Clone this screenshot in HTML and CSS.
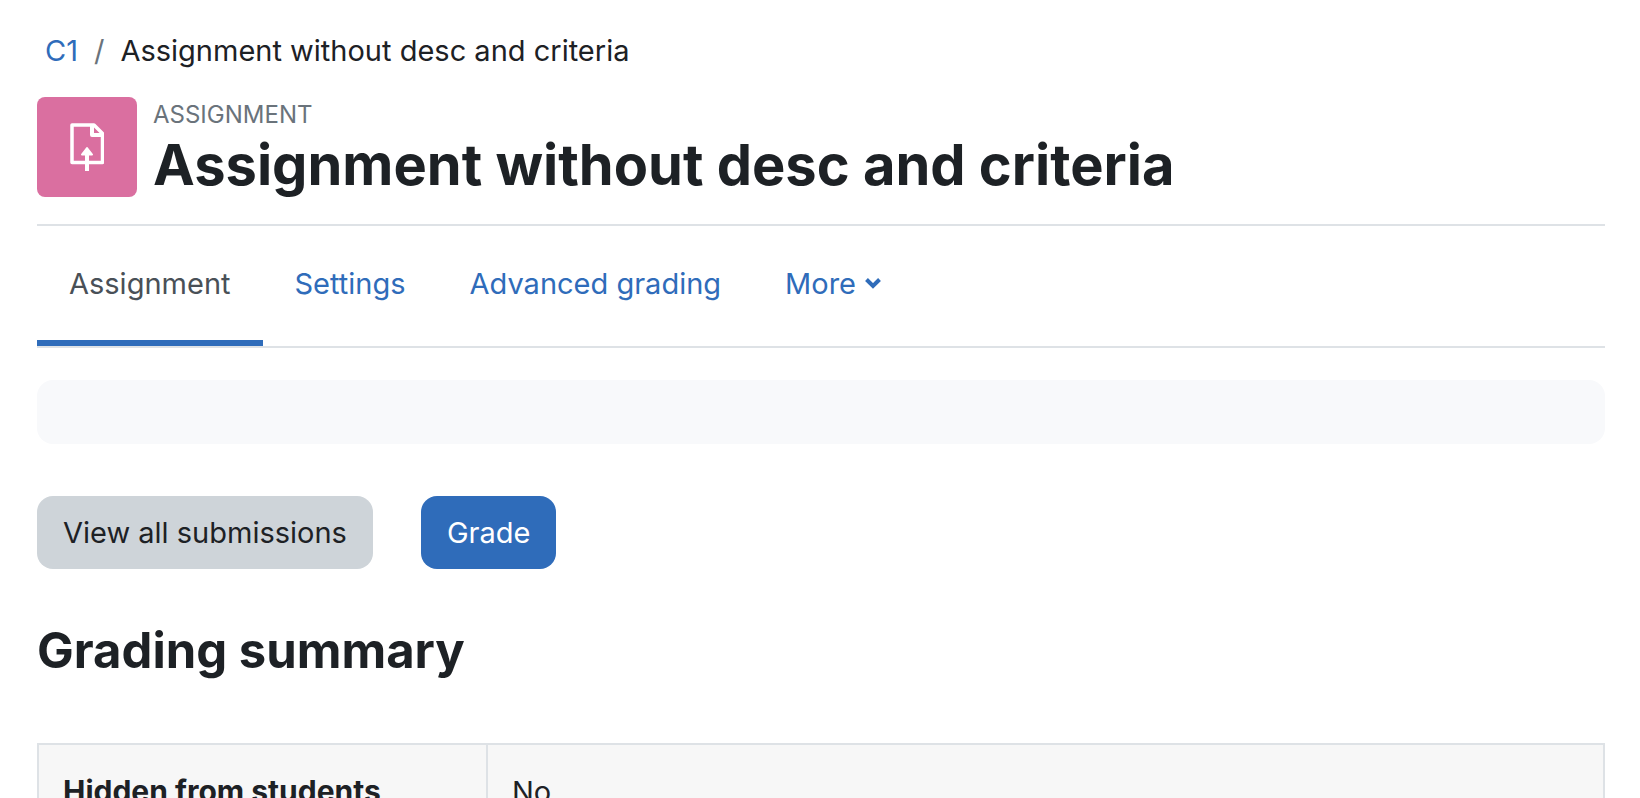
FILE: index.html
```
<!DOCTYPE html>
<html lang="en">
  <head>
    <meta charset="UTF-8" />
    <meta name="viewport" content="width=device-width, initial-scale=1.0" />
    <title>Assignment without desc and criteria</title>
    <link rel="stylesheet" href="styles.css">
  </head>
  <body>
    <nav aria-label="Breadcrumb">
      <ol class="breadcrumb">
        <li><a href="#">C1</a></li>
        <li>Assignment without desc and criteria</li>
      </ol>
    </nav>

    <header class="page-header">
      <div class="activity-icon">
        <svg width="34" height="48" viewBox="0 0 34 48" fill="none" stroke="#fff" stroke-width="3" stroke-linejoin="round" aria-hidden="true">
          <path d="M2 2H24L32.5 10.5V39.5H2Z" stroke-width="3.5" />
          <path d="M22 2V12H32.5" stroke-width="4" />
          <path d="M17 48V30" stroke-width="4" />
          <path d="M17 25L22 31.5H12Z" fill="#fff" stroke-width="2" />
        </svg>
      </div>
      <div class="page-heading">
        <div class="activity-type">Assignment</div>
        <h1>Assignment without desc and criteria</h1>
      </div>
    </header>

    <nav class="tabs" aria-label="Assignment navigation">
      <a class="tab active" href="#">Assignment</a>
      <a class="tab" href="#">Settings</a>
      <a class="tab" href="#">Advanced grading</a>
      <a class="tab" href="#">More
        <svg width="16" height="12" viewBox="0 0 16 12" fill="none" stroke="currentColor" stroke-width="4" aria-hidden="true">
          <path d="M1.5 2.5L8 9L14.5 2.5" />
        </svg>
      </a>
    </nav>

    <main>
      <div class="activity-info"></div>

      <div class="buttons">
        <button class="btn-secondary" type="button">View all submissions</button>
        <button class="btn-primary" type="button">Grade</button>
      </div>

      <h2>Grading summary</h2>
      <table class="summary">
        <tbody>
          <tr>
            <th scope="row">Hidden from students</th>
            <td>No</td>
          </tr>
        </tbody>
      </table>
    </main>
  </body>
</html>
```

FILE: styles.css
```
* {
    box-sizing: border-box;
}
html {
    overflow: hidden;
}
body {
    margin: 0;
    padding: 28px 35px 0 37px;
    background: #fff;
    color: #1d2125;
    font-family: Inter, "Liberation Sans", sans-serif;
    font-size: 29px;
    line-height: 45px;
}
a {
    color: #2f6cba;
    text-decoration: none;
}
.breadcrumb {
    display: flex;
    margin: 0;
    padding: 0 8px;
    list-style: none;
}
.breadcrumb li + li::before {
    content: "/";
    padding: 0 16px;
    color: #6a737b;
}
.page-header {
    display: flex;
    align-items: center;
    gap: 16px;
    padding: 22px 0 25px;
    border-bottom: 2px solid #dee2e6;
}
.activity-icon {
    display: flex;
    flex: none;
    align-items: center;
    justify-content: center;
    width: 100px;
    height: 100px;
    border-radius: 8px;
    background: #da6fa0;
}
.page-heading {
    padding-top: 4px;
}
.activity-type {
    color: #6a737b;
    font-size: 24px;
    line-height: 32px;
    text-transform: uppercase;
}
h1 {
    margin: 0;
    font-size: 56px;
    font-weight: 700;
    line-height: 68px;
}
.tabs {
    display: flex;
    border-bottom: 2px solid #dee2e6;
}
.tab {
    display: flex;
    align-items: center;
    gap: 9px;
    height: 120px;
    padding: 0 32px;
    border-bottom: 6px solid transparent;
}
.tab.active {
    border-bottom-color: #2f6cba;
    color: #495057;
}
.activity-info {
    height: 64px;
    margin-top: 32px;
    border-radius: 16px;
    background: #f8f9fb;
}
.buttons {
    display: flex;
    gap: 48px;
    margin-top: 52px;
}
button {
    padding: 14px 26px;
    border: none;
    border-radius: 16px;
    font: inherit;
}
.btn-secondary {
    background: #ced4d9;
    color: #1d2125;
}
.btn-primary {
    background: #2f6cba;
    color: #fff;
}
h2 {
    margin: 52px 0 62px;
    font-size: 49px;
    font-weight: 700;
    line-height: 60px;
}
.summary {
    width: 100%;
    border-collapse: collapse;
    background: #f7f7f7;
}
.summary th,
.summary td {
    padding: 24px;
    border: 2px solid #dee2e6;
    text-align: left;
}
.summary th {
    width: 449px;
    font-size: 30px;
}
```
